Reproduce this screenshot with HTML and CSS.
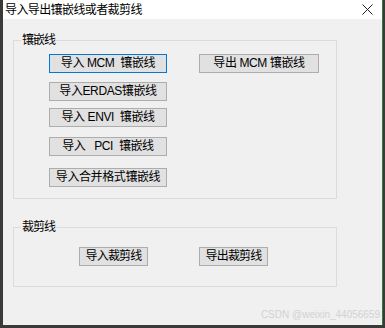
FILE: index.html
```html
<!DOCTYPE html>
<html lang="zh-CN">
<head>
  <meta charset="UTF-8">
  <title>导入导出镶嵌线或者裁剪线</title>
  <link rel="stylesheet" href="styles.css">
</head>
<body>

  <div class="window">
    <!-- 标题栏 -->
    <div class="titlebar">
      <span class="title">导入导出镶嵌线或者裁剪线</span>
      <svg class="close" width="11" height="11" viewBox="0 0 11 11">
        <path d="M0.5 0.5 L10.5 10.5 M10.5 0.5 L0.5 10.5" stroke="#222" stroke-width="1" fill="none"/>
      </svg>
    </div>

    <!-- 镶嵌线 -->
    <fieldset class="group group-mosaic">
      <legend>镶嵌线</legend>
      <div class="rows">
        <div class="row">
          <button class="btn btn-wide btn-focus">导入 MCM  镶嵌线</button>
          <button class="btn btn-wide btn-right">导出 MCM 镶嵌线</button>
        </div>
        <div class="row row-2"><button class="btn btn-wide">导入ERDAS镶嵌线</button></div>
        <div class="row row-3"><button class="btn btn-wide">导入 ENVI  镶嵌线</button></div>
        <div class="row row-4"><button class="btn btn-wide">导入   PCI  镶嵌线</button></div>
        <div class="row row-5"><button class="btn btn-wide">导入合并格式镶嵌线</button></div>
      </div>
    </fieldset>

    <!-- 裁剪线 -->
    <fieldset class="group group-clip">
      <legend>裁剪线</legend>
      <div class="row clip-row">
        <button class="btn btn-small">导入裁剪线</button>
        <button class="btn btn-small">导出裁剪线</button>
      </div>
    </fieldset>

    <div class="watermark">CSDN @weixin_44056659</div>
  </div>

</body>
</html>
```

FILE: styles.css
```css
* { margin: 0; padding: 0; box-sizing: border-box; }

body {
  width: 385px;
  height: 328px;
  background: #3a3a38;
  font-family: "Liberation Sans", "Noto Sans CJK SC", sans-serif;
  font-size: 12px;
  color: #000;
  overflow: hidden;
}

.window {
  position: relative;
  margin-left: 3px;
  width: 380px;
  height: 325px;
  background: #f0f0f0;
  border-right: 1px solid #2f7d3a;
}

/* 标题栏 */
.titlebar {
  height: 19px;
  background: #fff;
  display: flex;
  justify-content: space-between;
  align-items: center;
  padding: 0 9px 0 2px;
}

.title {
  font-size: 12px;
  line-height: 14px;
  letter-spacing: -0.6px;
}

.close {
  display: block;
  margin-top: -1px;
}

/* 分组框 */
.group {
  width: 324px;
  margin-left: 10px;
  border: 1px solid #dcdcdc;
  padding: 7px 0 11px 7px;
}

.group legend {
  padding: 0 1px;
  font-size: 12px;
  line-height: 14px;
  letter-spacing: -1px;
}

.group-mosaic {
  margin-top: 14px;
}

.group-clip {
  margin-top: 21px;
  padding-top: 13px;
  padding-bottom: 20px;
}

.rows {
  display: flex;
  flex-direction: column;
  padding-left: 28px;
}

.row {
  display: flex;
}

.row-2 { margin-top: 9px; }
.row-3 { margin-top: 7px; }
.row-4 { margin-top: 10px; }
.row-5 { margin-top: 12px; }

.clip-row {
  padding-left: 58px;
  gap: 51px;
}

/* 按钮 */
.btn {
  height: 19px;
  background: #e1e1e1;
  border: 1px solid #adadad;
  font-family: inherit;
  font-size: 12px;
  line-height: 15px;
  color: #000;
  white-space: pre;
  letter-spacing: -0.4px;
}

.btn-wide {
  width: 118px;
}

.btn-right {
  margin-left: 32px;
  width: 120px;
}

.btn-focus {
  border-color: #0078d7;
}

.btn-small {
  width: 69px;
  letter-spacing: -0.8px;
}

.watermark {
  position: absolute;
  right: 2px;
  bottom: 5px;
  font-size: 10px;
  color: #d2d2d2;
  white-space: nowrap;
}
```
